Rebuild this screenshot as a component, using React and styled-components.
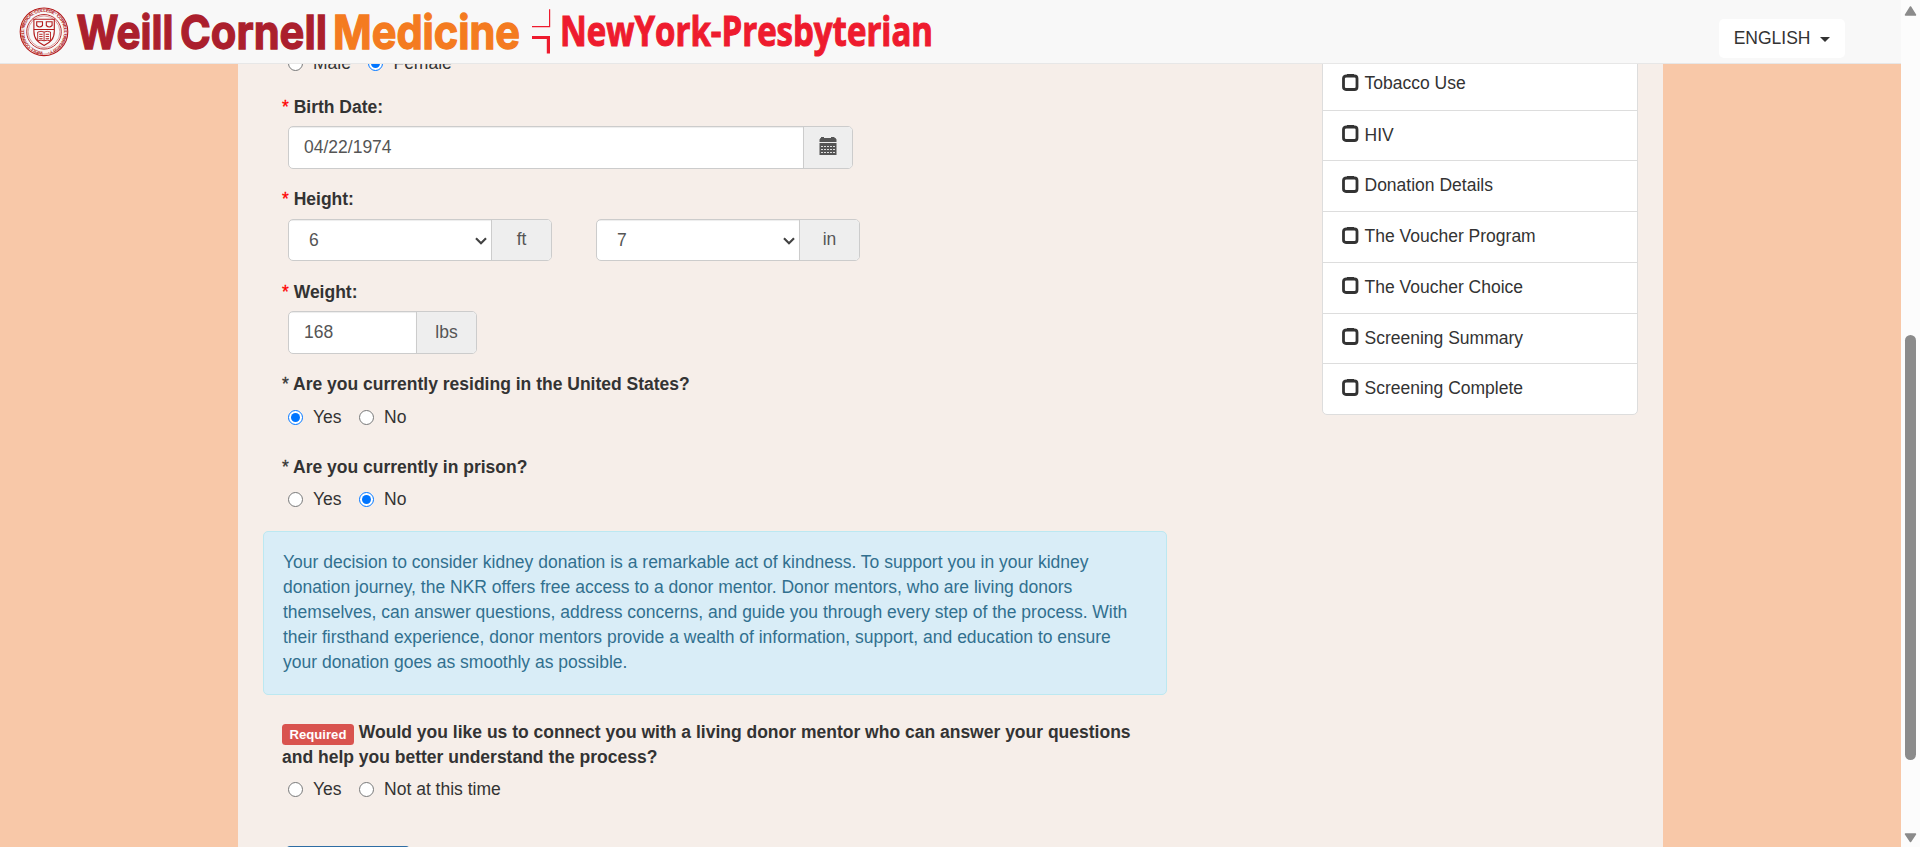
import React from "react";
import styled, { createGlobalStyle } from "styled-components";

const Global = createGlobalStyle`
  *, *::before, *::after { box-sizing: border-box; }
  html, body { margin: 0; height: 100%; overflow: hidden; }
  body {
    background: #f8c8a8;
    color: #333;
    font-family: "Liberation Sans", Arial, sans-serif;
    font-size: 17.5px;
    line-height: 25px;
  }
`;

const Window = styled.div`
  display: grid;
  grid-template-columns: 1fr 19px;
  height: 847px;
  overflow: hidden;
`;

const Page = styled.div`
  display: flex;
  flex-direction: column;
  min-width: 0;
  height: 847px;
`;

const Header = styled.header`
  flex: none;
  display: flex;
  justify-content: space-between;
  align-items: flex-start;
  height: 64px;
  padding-right: 56px;
  background: #f8f8f8;
  border-bottom: 1px solid #e7e7e7;
`;

const Logo = styled.svg`
  display: block;
  flex: none;
`;

const LanguageButton = styled.button`
  display: flex;
  align-items: center;
  height: 39px;
  margin-top: 19px;
  padding: 0 15px 0 15px;
  border: 0;
  border-radius: 5px;
  background: #fff;
  color: #333;
  font: inherit;
`;

const Caret = styled.span`
  margin: 2px 0 0 9.5px;
  border-top: 5px solid #333;
  border-left: 5px solid transparent;
  border-right: 5px solid transparent;
`;

const Scroller = styled.div`
  flex: 1;
  min-height: 0;
  overflow: hidden;
`;

const Container = styled.main`
  display: flex;
  justify-content: space-between;
  align-items: flex-start;
  width: 1425px;
  height: 100%;
  margin-left: 238px;
  padding: 0 25px;
  background: #f6eee9;
`;

const Form = styled.form`
  width: 904px;
  margin-top: -13px;
`;

const Field = styled.section`
  margin-left: 19px;
  margin-bottom: ${(p) => p.$gap}px;
`;

const Label = styled.div`
  font-weight: 700;
  margin-bottom: ${(p) => p.$gap ?? 8}px;
`;

const Star = styled.span`
  color: ${(p) => (p.$red ? "#f00" : "#333")};
  font-weight: 400;
  -webkit-text-stroke: 0.3px currentColor;
`;

const RadioRow = styled.div`
  display: flex;
  height: 25px;
  padding-left: 6px;
`;

const RadioLabel = styled.label`
  display: flex;
  margin-right: 17.5px;
`;

const Radio = styled.input`
  width: 15px;
  height: 15px;
  margin: 5px 10px 0 0;
`;

const Inputs = styled.div`
  display: flex;
  gap: 44px;
  padding-left: 6px;
`;

const InputGroup = styled.div`
  display: flex;
  width: ${(p) => p.$width}px;
  height: ${(p) => p.$height ?? 43}px;
  border: 1px solid #ccc;
  border-radius: 5px;
  overflow: hidden;
  background: #fff;
  color: #555;
`;

const Value = styled.div`
  flex: 1;
  display: flex;
  align-items: center;
  justify-content: space-between;
  padding: 0 4px 0 ${(p) => p.$inset ?? 15}px;
  box-shadow: inset 0 1px 1px rgba(0, 0, 0, 0.075);
`;

const Chevron = styled.svg`
  margin-top: 2px;
`;

const Addon = styled.div`
  display: flex;
  align-items: center;
  justify-content: center;
  width: ${(p) => p.$width ?? 60}px;
  padding-bottom: ${(p) => p.$lift ?? 1}px;
  background: #eee;
  border-left: 1px solid #ccc;
`;

const Alert = styled.div`
  height: 164px;
  margin-bottom: 25px;
  padding: 18px 19px;
  border: 1px solid #bce8f1;
  border-radius: 5px;
  background: #d9edf7;
  color: #31708f;
`;

const Badge = styled.span`
  display: inline-block;
  height: 21px;
  width: 72px;
  text-align: center;
  border-radius: 3.5px;
  background: #d9534f;
  color: #fff;
  font-size: 13.125px;
  line-height: 21px;
  vertical-align: -1px;
  margin: -4px 0;
`;

const NextButton = styled.button`
  display: block;
  width: 126px;
  height: 43px;
  margin-left: 22px;
  border: 1px solid #2e6da4;
  border-radius: 5px;
  background: #337ab7;
`;

const Steps = styled.ul`
  width: 316px;
  margin: -6.2px 0 0;
  padding: 0;
  list-style: none;
  background: #fff;
  border: 1px solid #ddd;
  border-radius: 5px;
`;

const Step = styled.li`
  display: flex;
  align-items: center;
  height: 50.75px;
  padding: 0 0 0.8px 19px;
  & + & { border-top: 1px solid #ddd; }
`;

const StepIcon = styled.svg`
  flex: none;
  margin: -3px 5.5px 0 0;
`;

const Scrollbar = styled.aside`
  display: flex;
  flex-direction: column;
  align-items: center;
  padding: 5px 0 5px 0;
  background: #fcfcfc;
`;

const Thumb = styled.div`
  flex: none;
  width: 11px;
  height: 425px;
  margin: 318px 0 72px;
  border-radius: 6px;
  background: #8b8b8b;
`;

const ScrollArrow = styled.svg`
  flex: none;
  display: block;
`;

const steps = [
  "Tobacco Use",
  "HIV",
  "Donation Details",
  "The Voucher Program",
  "The Voucher Choice",
  "Screening Summary",
  "Screening Complete",
];

function BrandLogo() {
  return (
    <Logo width="950" height="63" viewBox="0 0 950 63">
      <defs>
        <path id="seal-ring" d="M 43.3 51.2 a 19.9 19.9 0 1 1 0.1 0" />
      </defs>
      <g transform="translate(0.7 0.5)">
        <g fill="none" stroke="#b31b1b">
          <circle cx="43.3" cy="31.3" r="23.8" strokeWidth="1.1" />
          <circle cx="43.3" cy="31.3" r="22.3" strokeWidth="0.4" />
          <circle cx="43.3" cy="31.3" r="17.3" strokeWidth="0.9" />
          <circle cx="43.3" cy="31.3" r="15.9" strokeWidth="0.4" />
          <path d="M33.2 18.7 h20.4 v12 c0 8 -4 11 -10.2 14.4 c-6.2 -3.4 -10.2 -6.4 -10.2 -14.4 z" strokeWidth="1.1" />
          <path d="M33.2 29 h20.4" strokeWidth="1" />
          <path d="M36 21.3 h5.8 v3.7 q-2.9 3 -5.8 0 z M45.6 21.3 h5.8 v3.7 q-2.9 3 -5.8 0 z" strokeWidth="1.1" />
          <path d="M37 31.5 q3.5 -1.3 6.4 0 q3 -1.3 6.4 0 v8.8 q-3.4 -1.2 -6.4 0 q-3 -1.2 -6.4 0 z M43.4 31.5 v9 M38.5 33.8 h3.4 M38.5 36 h3.4 M38.5 38.2 h3.4 M45 33.8 h3.4 M45 36 h3.4 M45 38.2 h3.4" strokeWidth="0.9" />
        </g>
        <text fill="#b31b1b" fontFamily="Liberation Sans, sans-serif" fontWeight="700" fontSize="4.6">
          <textPath href="#seal-ring" startOffset="1" textLength="120">
            WEILL CORNELL MEDICAL COLLEGE · CORNELL UNIVERSITY ·
          </textPath>
        </text>
      </g>
      <g fontFamily="Inter, sans-serif" fontWeight="700" fontSize="47" strokeWidth="1.3">
        <text x="76.5" y="49.3" fill="#ab1f2d" stroke="#ab1f2d" textLength="97" lengthAdjust="spacingAndGlyphs">Weill</text>
        <text x="180" y="49.3" fill="#ab1f2d" stroke="#ab1f2d" textLength="147" lengthAdjust="spacingAndGlyphs">Cornell</text>
        <text x="333" y="49.3" fill="#f47b20" stroke="#f47b20" textLength="187" lengthAdjust="spacingAndGlyphs">Medicine</text>
      </g>
      <g fill="none" stroke="#ee1b2e">
        <path d="M532 26.6 H549.6 V9.3" strokeWidth="1.2" />
        <path d="M532 37.5 H548.4 V53.5" strokeWidth="3.2" />
      </g>
      <text x="560" y="46.3" fill="#ee1b2e" stroke="#ee1b2e" strokeWidth="1.1" fontFamily="Open Sans, sans-serif" fontWeight="700" fontSize="41.5" textLength="373" lengthAdjust="spacingAndGlyphs">
        NewYork-Presbyterian
      </text>
    </Logo>
  );
}

function SelectArrow() {
  return (
    <Chevron width="12" height="8" viewBox="0 0 12 8">
      <path d="M1 1.2 L6 6.2 L11 1.2" fill="none" stroke="#444" strokeWidth="2.2" />
    </Chevron>
  );
}

function CalendarIcon() {
  return (
    <svg width="18" height="18" viewBox="0 0 18 18" fill="#555">
      <path d="M0.5 5 V2.5 L1.5 1 H2 V0 H5 V1 H12 V0 H15.5 V1 H16.5 L17.5 2.5 V5 Z M0.5 6 H17.5 V18 H0.5 Z" />
      <path d="M2 9.5 H16.5 M2 12.5 H16.5 M2 15.5 H16.5" stroke="#eee" strokeWidth="0.9" strokeDasharray="2 1" />
    </svg>
  );
}

function Options({ name, items, checked }) {
  return (
    <RadioRow>
      {items.map((item) => (
        <RadioLabel key={item}>
          <Radio type="radio" name={name} defaultChecked={item === checked} />
          {item}
        </RadioLabel>
      ))}
    </RadioRow>
  );
}

export default function App() {
  return (
    <>
      <Global />
      <Window>
        <Page>
          <Header>
            <BrandLogo />
            <LanguageButton>
              ENGLISH
              <Caret />
            </LanguageButton>
          </Header>
          <Scroller>
            <Container>
              <Form>
                <Field $gap={18.5}>
                  <Options name="sex" items={["Male", "Female"]} checked="Female" />
                </Field>
                <Field $gap={18}>
                  <Label $gap={6.5}><Star $red>*</Star> Birth Date:</Label>
                  <Inputs>
                    <InputGroup $width={565}>
                      <Value>04/22/1974</Value>
                      <Addon $width={49} $lift={3}><CalendarIcon /></Addon>
                    </InputGroup>
                  </Inputs>
                </Field>
                <Field $gap={19}>
                  <Label $gap={7}><Star $red>*</Star> Height:</Label>
                  <Inputs>
                    <InputGroup $width={264} $height={42}>
                      <Value $inset={20}>6<SelectArrow /></Value>
                      <Addon>ft</Addon>
                    </InputGroup>
                    <InputGroup $width={264} $height={42}>
                      <Value $inset={20}>7<SelectArrow /></Value>
                      <Addon>in</Addon>
                    </InputGroup>
                  </Inputs>
                </Field>
                <Field $gap={17.5}>
                  <Label $gap={6}><Star $red>*</Star> Weight:</Label>
                  <Inputs>
                    <InputGroup $width={189}>
                      <Value>168</Value>
                      <Addon>lbs</Addon>
                    </InputGroup>
                  </Inputs>
                </Field>
                <Field $gap={25}>
                  <Label><Star>*</Star> Are you currently residing in the United States?</Label>
                  <Options name="resident" items={["Yes", "No"]} checked="Yes" />
                </Field>
                <Field $gap={19.5}>
                  <Label $gap={7}><Star>*</Star> Are you currently in prison?</Label>
                  <Options name="prison" items={["Yes", "No"]} checked="No" />
                </Field>
                <Alert>
                  Your decision to consider kidney donation is a remarkable act of kindness. To support you in your kidney<br />
                  donation journey, the NKR offers free access to a donor mentor. Donor mentors, who are living donors<br />
                  themselves, can answer questions, address concerns, and guide you through every step of the process. With<br />
                  their firsthand experience, donor mentors provide a wealth of information, support, and education to ensure<br />
                  your donation goes as smoothly as possible.
                </Alert>
                <Field $gap={44}>
                  <Label $gap={7}>
                    <Badge>Required</Badge> Would you like us to connect you with a living donor mentor who can answer your questions<br />
                    and help you better understand the process?
                  </Label>
                  <Options name="mentor" items={["Yes", "Not at this time"]} />
                </Field>
                <NextButton type="button" aria-label="Next" />
              </Form>
              <Steps>
                {steps.map((step) => (
                  <Step key={step}>
                    <StepIcon width="17" height="17" viewBox="0 0 17 17">
                      <path d="M4.5 2 H12.5 Q15 2 15 4.5 V13 Q15 15.5 12.5 15.5 H4 Q1.5 15.5 1.5 13 V4.5 Q1.5 2 4.5 2 Z" fill="none" stroke="#333" strokeWidth="2.8" />
                      <path d="M5 0 H12 V3 H5 Z" fill="#333" />
                    </StepIcon>
                    {step}
                  </Step>
                ))}
              </Steps>
            </Container>
          </Scroller>
        </Page>
        <Scrollbar>
          <ScrollArrow width="13" height="12" viewBox="0 0 13 12">
            <path d="M6.5 2 L11.5 10 H1.5 Z" fill="#8b8b8b" stroke="#8b8b8b" strokeWidth="1.5" strokeLinejoin="round" />
          </ScrollArrow>
          <Thumb />
          <ScrollArrow width="13" height="12" viewBox="0 0 13 12">
            <path d="M6.5 9.5 L11.5 2 H1.5 Z" fill="#8b8b8b" stroke="#8b8b8b" strokeWidth="1.5" strokeLinejoin="round" />
          </ScrollArrow>
        </Scrollbar>
      </Window>
    </>
  );
}
